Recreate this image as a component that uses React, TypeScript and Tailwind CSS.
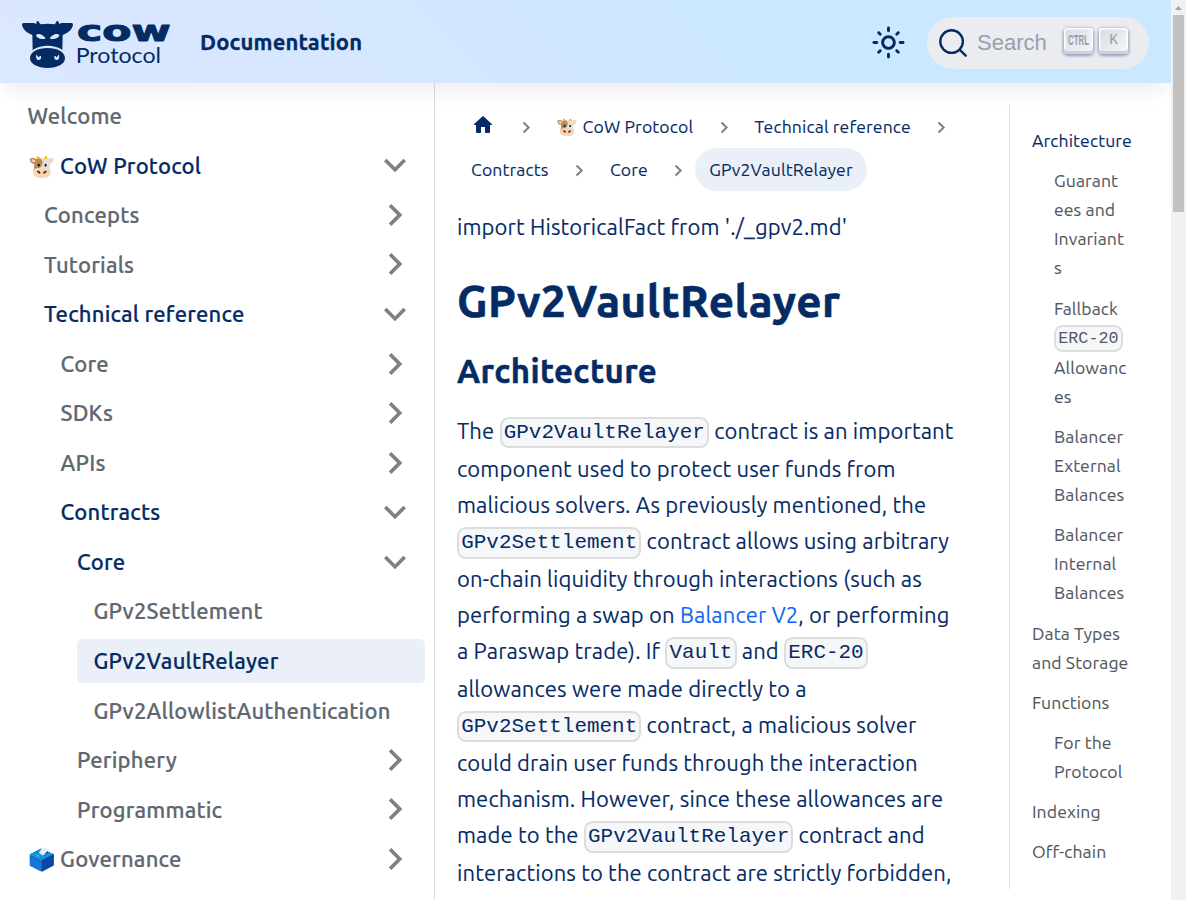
import type { ReactNode } from "react";

type NavItem = {
  label: string;
  level: 0 | 1 | 2 | 3 | 4;
  state?: "open" | "closed";
  highlighted?: boolean;
  active?: boolean;
};

const navItems: NavItem[] = [
  { label: "Welcome", level: 0 },
  { label: "🐮 CoW Protocol", level: 0, state: "open", highlighted: true },
  { label: "Concepts", level: 1, state: "closed" },
  { label: "Tutorials", level: 1, state: "closed" },
  { label: "Technical reference", level: 1, state: "open", highlighted: true },
  { label: "Core", level: 2, state: "closed" },
  { label: "SDKs", level: 2, state: "closed" },
  { label: "APIs", level: 2, state: "closed" },
  { label: "Contracts", level: 2, state: "open", highlighted: true },
  { label: "Core", level: 3, state: "open", highlighted: true },
  { label: "GPv2Settlement", level: 4 },
  { label: "GPv2VaultRelayer", level: 4, active: true, highlighted: true },
  { label: "GPv2AllowlistAuthentication", level: 4 },
  { label: "Periphery", level: 3, state: "closed" },
  { label: "Programmatic", level: 3, state: "closed" },
  { label: "🗳️ Governance", level: 0, state: "closed" },
];

const indent = ["ml-0", "ml-[16.5px]", "ml-[33px]", "ml-[49.5px]", "ml-[66px]"];

function Code({ children }: { children: ReactNode }) {
  return (
    <code className="rounded-[8.8px] border-[2.2px] border-black/10 bg-[#f6f7f8] p-[2.2px] align-middle font-['Liberation_Mono',monospace] text-[95%] leading-[1.65] tracking-[0.04px] [-webkit-text-stroke:0]">
      {children}
    </code>
  );
}

function CowLogo() {
  return (
    <svg className="h-[50px] w-[152px] shrink-0 overflow-visible" viewBox="66 60 456 150" fill="#052b65">
      <mask id="cow-face">
        <rect x="60" y="55" width="170" height="160" fill="#fff" />
        <path d="M108 105C113 100 121 102 127 106C132 109 135 111 136 116C127 118 110 117 108 105Z" fill="#000" />
        <path d="M178 105C173 100 165 102 159 106C154 109 151 111 150 116C159 118 176 117 178 105Z" fill="#000" />
        <ellipse cx="143" cy="173" rx="58" ry="36" fill="#000" />
      </mask>
      <path
        mask="url(#cow-face)"
        d="M66 73C66 70 70 69 76 69H100C104 69 107 71 109 73C108 68 110 63 115 62C117 67 119 71 123 73C135 71 150 71 163 73C167 71 168 66 171 62C176 64 178 68 177 73C179 71 182 69 186 69H210C216 69 219 70 219 73C218 87 207 98 188 105L187 152H98L97 105C80 99 67 87 66 73Z"
      />
      <path
        fillRule="evenodd"
        d="M143 144C172 144 195 156 195 175C195 192 173 204 143 204C113 204 90 192 90 175C90 156 113 144 143 144ZM110 162C107 169 108 178 114 180C120 181 125 176 123 168C120 167 118 169 117 172C113 170 111 167 110 162ZM176 162C179 169 178 178 172 180C166 181 161 176 163 168C166 167 168 169 169 172C173 170 175 167 176 162Z"
      />
      <text x="231" y="124" fontFamily="'DejaVu Sans', sans-serif" fontWeight="700" fontSize="83" textLength="281" lengthAdjust="spacingAndGlyphs" stroke="#052b65" strokeWidth="3" strokeLinejoin="round">
        cow
      </text>
      <text x="227" y="189" fontFamily="Lato, sans-serif" fontWeight="400" fontSize="66" textLength="256" lengthAdjust="spacingAndGlyphs">
        Protocol
      </text>
    </svg>
  );
}

function SunIcon() {
  return (
    <svg viewBox="0 0 24 24" className="size-[35px]" fill="#052b65">
      <path d="M12,9c1.65,0,3,1.35,3,3s-1.35,3-3,3s-3-1.35-3-3S10.35,9,12,9 M12,7c-2.76,0-5,2.24-5,5s2.24,5,5,5s5-2.24,5-5 S14.76,7,12,7L12,7z M2,13l2,0c0.55,0,1-0.45,1-1s-0.45-1-1-1l-2,0c-0.55,0-1,0.45-1,1S1.45,13,2,13z M20,13l2,0c0.55,0,1-0.45,1-1 s-0.45-1-1-1l-2,0c-0.55,0-1,0.45-1,1S19.45,13,20,13z M11,2v2c0,0.55,0.45,1,1,1s1-0.45,1-1V2c0-0.55-0.45-1-1-1S11,1.45,11,2z M11,20v2c0,0.55,0.45,1,1,1s1-0.45,1-1v-2c0-0.55-0.45-1-1-1C11.45,19,11,19.45,11,20z M5.99,4.58c-0.39-0.39-1.03-0.39-1.41,0 c-0.39,0.39-0.39,1.03,0,1.41l1.06,1.06c0.39,0.39,1.03,0.39,1.41,0s0.39-1.03,0-1.41L5.99,4.58z M18.36,16.95 c-0.39-0.39-1.03-0.39-1.41,0c-0.39,0.39-0.39,1.03,0,1.41l1.06,1.06c0.39,0.39,1.03,0.39,1.41,0c0.39-0.39,0.39-1.03,0-1.41 L18.36,16.95z M19.42,5.99c0.39-0.39,0.39-1.03,0-1.41c-0.39-0.39-1.03-0.39-1.41,0l-1.06,1.06c-0.39,0.39-0.39,1.03,0,1.41 s1.03,0.39,1.41,0L19.42,5.99z M7.05,18.36c0.39-0.39,0.39-1.03,0-1.41c-0.39-0.39-1.03-0.39-1.41,0l-1.06,1.06 c-0.39,0.39-0.39,1.03,0,1.41s1.03,0.39,1.41,0L7.05,18.36z" />
    </svg>
  );
}

function Key({ children }: { children: ReactNode }) {
  return (
    <kbd className="flex h-[26px] w-[29px] items-center justify-center rounded-[4px] bg-[linear-gradient(-225deg,#d5dbe4,#f8f8f8)] text-[#969faf] shadow-[inset_0_-3px_0_0_#cdcde6,inset_0_0_1px_1.5px_#fff,0_1px_3px_1px_rgba(30,35,90,0.4)]">
      {children}
    </kbd>
  );
}

function Header() {
  return (
    <header className="relative z-10 flex h-[83px] shrink-0 items-center bg-[linear-gradient(45deg,#dbe8ff_0%,#d7e7ff_28%,#cae8ff_65%,#cae8ff_100%)] px-[22px] shadow-[0_12px_18px_-4px_rgba(0,0,60,0.07)]">
      <div className="mt-[7px] mr-[26px] flex">
        <CowLogo />
      </div>
      <b className="text-[22px] leading-[36px] font-bold tracking-[0.15px] [-webkit-text-stroke:0.3px]">Documentation</b>
      <div className="mt-[2px] mr-[21px] ml-auto flex">
        <SunIcon />
      </div>
      <button className="mt-[2px] flex h-[52px] w-[222px] items-center rounded-full bg-[#ebecf0] pl-[11px] font-['Liberation_Sans',sans-serif]">
        <svg viewBox="0 0 20 20" className="size-[30px]">
          <path
            d="M14.386 14.386l4.0877 4.0877-4.0877-4.0877c-2.9418 2.9419-7.7115 2.9419-10.6533 0-2.9419-2.9418-2.9419-7.7115 0-10.6533 2.9418-2.9419 7.7115-2.9419 10.6533 0 2.9419 2.9418 2.9419 7.7115 0 10.6533z"
            stroke="#052b65"
            strokeWidth="1.6"
            fill="none"
            strokeLinecap="round"
            strokeLinejoin="round"
          />
        </svg>
        <span className="ml-[9px] text-[22px] leading-[26px] text-[#969faf]">Search</span>
        <span className="ml-[17px] flex gap-[6.5px] pb-[3px]">
          <Key>
            <svg width="21" height="16" viewBox="0 0 21 16" className="mb-[4px] overflow-visible">
              <text x="0" y="13.5" fontFamily="'Liberation Sans Narrow', 'Liberation Sans', sans-serif" fontWeight="700" fontSize="15" textLength="21" lengthAdjust="spacingAndGlyphs" fill="#969faf">
                CTRL
              </text>
            </svg>
          </Key>
          <Key>
            <span className="mb-[3px] text-[14.5px] leading-[16px]">K</span>
          </Key>
        </span>
      </button>
    </header>
  );
}

function Chevron({ open }: { open: boolean }) {
  return (
    <svg viewBox="0 0 24 24" className={open ? "size-[44px] rotate-180" : "size-[44px] rotate-90"} fill="#808080">
      <path d="M7.41 15.41L12 10.83l4.59 4.58L18 14l-6-6-6 6z" />
    </svg>
  );
}

function Sidebar() {
  return (
    <nav className="flex w-[435px] shrink-0 flex-col gap-[5.54px] overflow-hidden border-r border-[#dadde1] pt-[10.9px] pr-[9px] pl-[11px]">
      {navItems.map((item, i) => (
        <div
          key={i}
          className={[
            "flex h-[44px] shrink-0 items-center justify-between rounded-[5.5px] pl-[16.5px] pr-[8.5px] text-[22px] leading-[27.5px] font-medium tracking-[0.21px] whitespace-nowrap [-webkit-text-stroke:0.2px]",
            indent[item.level],
            item.highlighted ? "text-[#052b65]" : "text-[#606770]",
            item.active ? "bg-[#ebf0f8]" : "",
          ].join(" ")}
        >
          <span>{item.label}</span>
          {item.state && <Chevron open={item.state === "open"} />}
        </div>
      ))}
    </nav>
  );
}

function CrumbArrow() {
  return (
    <svg width="9" height="13" viewBox="0 0 9 13" className="mt-[2px] mr-[11.8px] ml-[12.5px]" fill="none" stroke="#808080" strokeWidth="2">
      <path d="M1.5 1.5L6.7 6.5L1.5 11.5" />
    </svg>
  );
}

function Crumb({ children, active, last }: { children: ReactNode; active?: boolean; last?: boolean }) {
  return (
    <li className="flex items-center">
      <span
        className={
          active
            ? "flex h-[43px] items-center rounded-[44px] bg-[#ebf0f8] px-[14px]"
            : "flex h-[43px] items-center px-[14px]"
        }
      >
        {children}
      </span>
      {!last && <CrumbArrow />}
    </li>
  );
}

function Article() {
  return (
    <main className="w-[552px] shrink-0 pt-[22px] pr-[24px] pl-[22px] tracking-[0.13px] [-webkit-text-stroke:0.1px]">
      <ul className="mb-[17.6px] flex flex-wrap text-[17.6px] leading-[29px]">
        <Crumb>
          <svg viewBox="0 0 24 24" className="mb-[3px] size-[24px]" fill="#052b65">
            <path d="M10 19v-5h4v5c0 .55.45 1 1 1h3c.55 0 1-.45 1-1v-7h1.7c.46 0 .68-.57.33-.87L12.67 3.6c-.38-.34-.96-.34-1.34 0l-8.36 7.53c-.34.3-.13.87.33.87H5v7c0 .55.45 1 1 1h3c.55 0 1-.45 1-1z" />
          </svg>
        </Crumb>
        <Crumb>🐮 CoW Protocol</Crumb>
        <Crumb>Technical reference</Crumb>
        <Crumb>Contracts</Crumb>
        <Crumb>Core</Crumb>
        <Crumb active last>
          GPv2VaultRelayer
        </Crumb>
      </ul>
      <p className="mb-[28px] leading-[36.3px]">import HistoricalFact from './_gpv2.md'</p>
      <h1 className="mb-[22px] text-[44px] leading-[55px] font-bold tracking-[0.5px] [-webkit-text-stroke:0.6px]">GPv2VaultRelayer</h1>
      <h2 className="mb-[22px] text-[33px] leading-[41.25px] font-bold tracking-[0.35px] [-webkit-text-stroke:0.45px]">Architecture</h2>
      <p className="leading-[36.3px]">
        The <Code>GPv2VaultRelayer</Code> contract is an important component used to protect user funds from malicious
        solvers. As previously mentioned, the <Code>GPv2Settlement</Code> contract allows using arbitrary on-chain
        liquidity through interactions (such as performing a swap on{" "}
        <a className="text-[#1366f2]">Balancer V2</a>, or performing a Paraswap trade). If <Code>Vault</Code> and{" "}
        <Code>ERC-20</Code> allowances were made directly to a <Code>GPv2Settlement</Code> contract, a malicious solver
        could drain user funds through the interaction mechanism. However, since these allowances are made to the{" "}
        <Code>GPv2VaultRelayer</Code> contract and interactions to the contract are strictly forbidden,
      </p>
    </main>
  );
}

function TocItem({ children, nested, current }: { children: ReactNode; nested?: boolean; current?: boolean }) {
  return (
    <li
      className={[
        "leading-[29.04px]",
        nested ? "pr-[2.5px] pl-[22px] wrap-break-word" : "",
        current ? "text-[#052b65]" : "text-[#525860]",
      ].join(" ")}
    >
      {children}
    </li>
  );
}

function TableOfContents() {
  return (
    <aside className="mt-[21px] ml-[22px] h-[785px] w-[140px] shrink-0 overflow-hidden border-l border-[#dadde1] pt-[22.2px] pr-[19px] pl-[22px] text-[17.6px] tracking-[0.1px] [-webkit-text-stroke:0.1px]">
      <ul className="flex flex-col gap-[11.1px]">
        <TocItem current>Architecture</TocItem>
        <TocItem nested>Guarantees and Invariants</TocItem>
        <TocItem nested>
          Fallback <Code>ERC-20</Code> Allowances
        </TocItem>
        <TocItem nested>Balancer External Balances</TocItem>
        <TocItem nested>Balancer Internal Balances</TocItem>
        <TocItem>Data Types and Storage</TocItem>
        <TocItem>Functions</TocItem>
        <TocItem nested>For the Protocol</TocItem>
        <TocItem>Indexing</TocItem>
        <TocItem>Off-chain</TocItem>
      </ul>
    </aside>
  );
}

function Scrollbar() {
  return (
    <div className="flex w-[15px] shrink-0 flex-col items-center bg-[#f1f1f1]">
      <svg width="15" height="15" viewBox="0 0 15 15" fill="#a3a3a3" className="shrink-0">
        <path d="M4 10L7.5 6L11 10Z" />
      </svg>
      <div className="h-[197px] w-[11px] bg-[#c1c1c1]" />
    </div>
  );
}

export default function App() {
  return (
    <div className="flex h-[900px] w-[1186px] overflow-hidden bg-white font-['Ubuntu','Noto_Sans',sans-serif] text-[22px] text-[#052b65] [text-rendering:optimizeLegibility]">
      <div className="flex w-[1171px] flex-col overflow-hidden">
        <Header />
        <div className="flex min-h-0 flex-1">
          <Sidebar />
          <Article />
          <TableOfContents />
        </div>
      </div>
      <Scrollbar />
    </div>
  );
}
